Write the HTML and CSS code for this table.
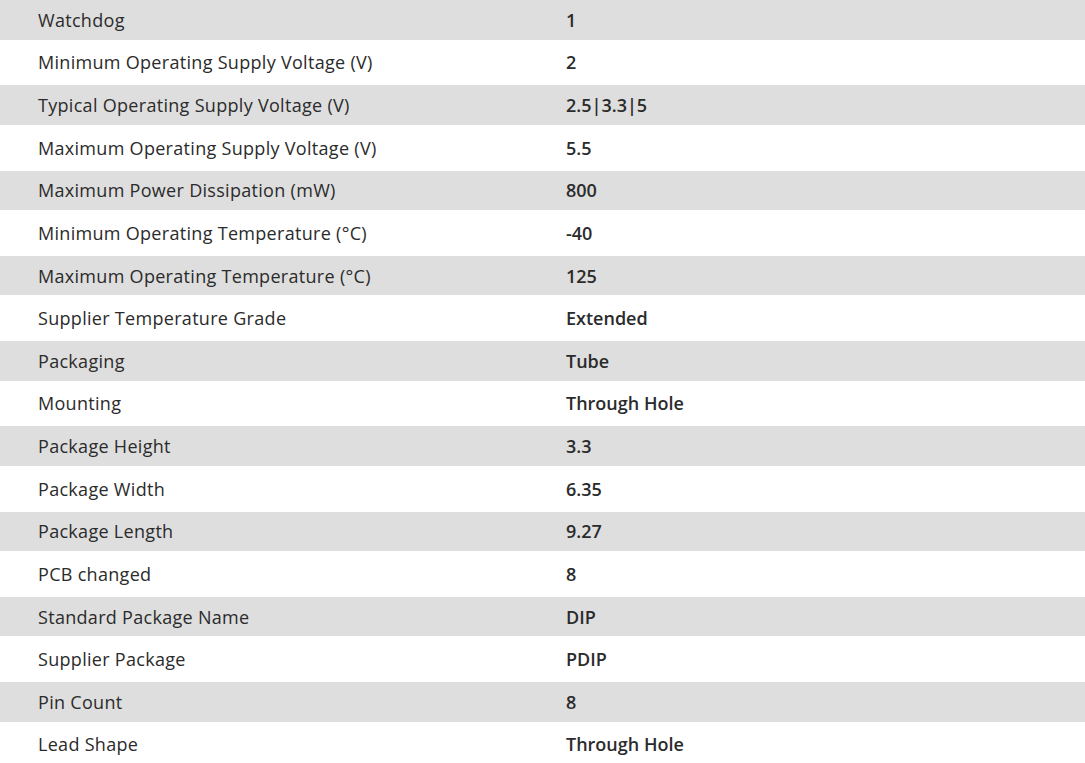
FILE: index.html
```html
<!DOCTYPE html>
<html>
<head>
<meta charset="utf-8">
<link rel="stylesheet" href="styles.css">
</head>
<body>
<div class="specs">
  <div class="row"><div class="label">Watchdog</div><div class="value">1</div></div>
  <div class="row"><div class="label">Minimum Operating Supply Voltage (V)</div><div class="value">2</div></div>
  <div class="row"><div class="label">Typical Operating Supply Voltage (V)</div><div class="value">2.5|3.3|5</div></div>
  <div class="row"><div class="label">Maximum Operating Supply Voltage (V)</div><div class="value">5.5</div></div>
  <div class="row"><div class="label">Maximum Power Dissipation (mW)</div><div class="value">800</div></div>
  <div class="row"><div class="label">Minimum Operating Temperature (°C)</div><div class="value">-40</div></div>
  <div class="row"><div class="label">Maximum Operating Temperature (°C)</div><div class="value">125</div></div>
  <div class="row"><div class="label">Supplier Temperature Grade</div><div class="value">Extended</div></div>
  <div class="row"><div class="label">Packaging</div><div class="value">Tube</div></div>
  <div class="row"><div class="label">Mounting</div><div class="value">Through Hole</div></div>
  <div class="row"><div class="label">Package Height</div><div class="value">3.3</div></div>
  <div class="row"><div class="label">Package Width</div><div class="value">6.35</div></div>
  <div class="row"><div class="label">Package Length</div><div class="value">9.27</div></div>
  <div class="row"><div class="label">PCB changed</div><div class="value">8</div></div>
  <div class="row"><div class="label">Standard Package Name</div><div class="value">DIP</div></div>
  <div class="row"><div class="label">Supplier Package</div><div class="value">PDIP</div></div>
  <div class="row"><div class="label">Pin Count</div><div class="value">8</div></div>
  <div class="row"><div class="label">Lead Shape</div><div class="value">Through Hole</div></div>
</div>
</body>
</html>
```

FILE: styles.css
```css
html, body {
  margin: 0;
  padding: 0;
  background: #ffffff;
}
body {
  font-family: "Open Sans", "Noto Sans", sans-serif;
  font-size: 18px;
  color: #2b2b2b;
  overflow: hidden;
}
.specs {
  display: flex;
  flex-direction: column;
}
.row {
  display: flex;
  align-items: center;
  height: 45.75px;
  background: #ffffff;
}
.row:nth-child(odd) {
  height: 39.5px;
  background: #dedede;
}
.label {
  width: 528px;
  padding-left: 38px;
  box-sizing: content-box;
  letter-spacing: 0.3px;
}
.value {
  font-weight: 600;
}
```
